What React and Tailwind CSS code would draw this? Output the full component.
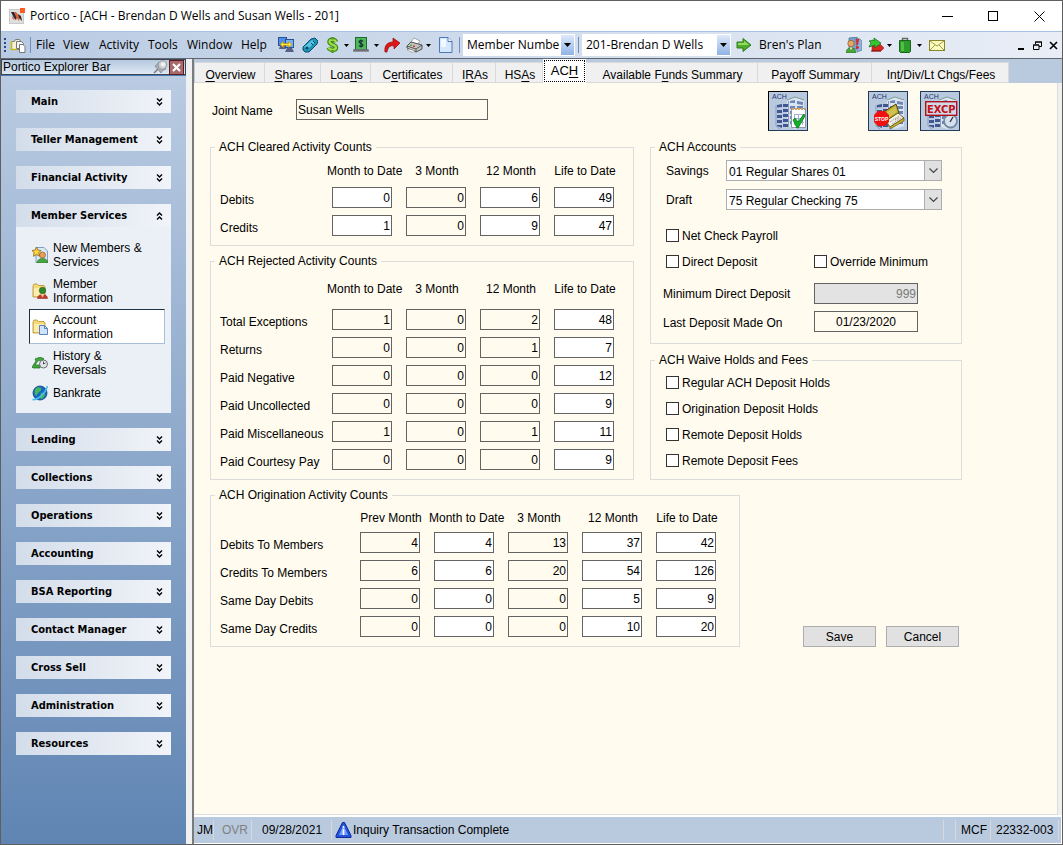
import React from "react";

const ui = "font-['Open_Sans','Noto_Sans',sans-serif]";

/* ---------- toolbar and side bar drawings ---------- */

const Svg = ({ w = 16, h = 16, children, className = "" }) => (
  <svg width={w} height={h} viewBox={`0 0 ${w} ${h}`} className={`shrink-0 ${className}`} aria-hidden="true">
    {children}
  </svg>
);

const LogoIcon = () => (
  <Svg>
    <rect x="0.5" y="1.5" width="14" height="14" fill="#dedede" stroke="#c9c9c9" />
    <path d="M2 4l3 0 3 5-1 3-2-2z" fill="#1f2a44" />
    <path d="M5 4l2 0 4 5-1 4-3-4z" fill="#e8622a" />
    <path d="M9 6l3 2 1 5-3-3z" fill="#2c2c3c" />
    <path d="M3 8l3 3-1 1-2-2z" fill="#f0743c" />
    <rect x="11" y="0" width="5" height="5" fill="#ff5a1f" />
  </Svg>
);

const FolderDocsIcon = () => (
  <Svg>
    <path d="M1.500 4.500h3l1-2h4l1 2v8h-9z" fill="#f3f1de" stroke="#7d7d70" />
    <path d="M1.500 13V4M1 12.500h6" stroke="#c9b81a" strokeWidth="1.600" />
    <path d="M6.500 4.500h5l2 2v5h-7z" fill="#f4f4f4" stroke="#777" />
    <path d="M9.500 7.500h3.500l2 2v6H9.500z" fill="#fff" stroke="#777" />
  </Svg>
);

const ComputersIcon = () => (
  <Svg>
    <rect x="0.5" y="0.5" width="8" height="8" fill="#4f8fe8" stroke="#2d4f96" />
    <path d="M2 9h5l1 3H1z" fill="#5a5f86" />
    <rect x="7.500" y="2.500" width="8" height="8" fill="#79b1f5" stroke="#2d4f96" />
    <path d="M9 11h5l2 4H7z" fill="#5a5f86" />
    <path d="M2 7.500l3.500-3v2h5v-2l3.500 3-3.500 3v-2h-5v2z" fill="#ffe23a" stroke="#b58a00" strokeWidth=".6" />
  </Svg>
);

const RemoteIcon = () => (
  <Svg>
    <path d="M1 10l8-8 4-1 3 3-1 3-8 8-4 0-2-2z" fill="#1d93b8" stroke="#0b4f72" />
    <path d="M2 10l8-7 3 2-8 8z" fill="#56c6e0" />
    <circle cx="5" cy="11" r="1.6" fill="#0d4068" />
    <path d="M9 6l2 2M11 4l2 2" stroke="#0d4068" />
  </Svg>
);

const DollarIcon = () => (
  <Svg w={13}>
    <path d="M10 5C9 2 3.500 2 3.500 5c0 3 6.500 2.500 6.500 5.500 0 3-6 3-7.500 0" fill="none" stroke="#3c8a18" strokeWidth="4.500" />
    <path d="M10 5C9 2 3.500 2 3.500 5c0 3 6.500 2.500 6.500 5.500 0 3-6 3-7.500 0" fill="none" stroke="#a2de48" strokeWidth="2.200" />
    <path d="M6.500 0v2.500M6.500 13v3" stroke="#4e9b20" strokeWidth="2.400" />
  </Svg>
);

const CashIcon = () => (
  <Svg>
    <rect x="2.500" y="0.500" width="11" height="12" fill="#4fb85a" stroke="#1c6b2b" />
    <path d="M10 4.500C9 3 6 3.300 6 5s4 1.200 4 3-3 2-4 .500M8 2.500v8" fill="none" stroke="#123" strokeWidth="1.100" />
    <path d="M0 12h16v3H0z" fill="#8c9296" />
    <path d="M1 13h14" stroke="#4d5255" />
  </Svg>
);

const RedArrowIcon = () => (
  <Svg>
    <path d="M1 15c-1-7 3-10 8-10V1l7 5-6 6V9c-4-1-6 1-7 6z" fill="#e01515" stroke="#8f0a0a" strokeWidth=".7" />
  </Svg>
);

const PrinterIcon = () => (
  <Svg w={17}>
    <path d="M8 1l6 3-3 4-6-3z" fill="#fff" stroke="#888" strokeWidth=".7" />
    <path d="M1 9l4-4 11 3v4l-6 3-9-4z" fill="#c4c4c4" stroke="#444" strokeWidth=".9" />
    <path d="M1 9l9 3 6-4M10 12v3" fill="none" stroke="#444" strokeWidth=".8" />
    <path d="M3 12l6 2-2 1.500-6-2.500z" fill="#fff" stroke="#777" strokeWidth=".5" />
    <rect x="4" y="7.500" width="2" height="1.500" fill="#3fc13f" />
    <rect x="7" y="8.500" width="2" height="1.500" fill="#e03030" />
  </Svg>
);

const PageIcon = () => (
  <Svg w={14}>
    <path d="M.5.500H9L13 4.500v11H.5z" fill="#d5e7fd" stroke="#4f78b8" />
    <path d="M2 2h5v8H2z" fill="#f2f8ff" />
    <path d="M9 .5v4h4" fill="#fff" stroke="#4f78b8" />
  </Svg>
);

const GoIcon = () => (
  <Svg>
    <path d="M1 5h6V1.500L15 8l-8 6.500V11H1z" fill="#4dac2a" stroke="#2f7d16" />
    <path d="M2 6h6V4l5 4H2z" fill="#97dc62" />
  </Svg>
);

const PeopleIcon = () => (
  <Svg>
    <path d="M3 1l8-1v12H3z" fill="#7a9fc9" stroke="#48688f" strokeWidth=".7" />
    <path d="M10 1l4 1 2 2v9l-5 2z" fill="#8fb4dc" stroke="#48688f" strokeWidth=".6" />
    <path d="M10 2h3l-.8 6h-1.400z" fill="#df2222" />
    <circle cx="11.500" cy="10.500" r="1.400" fill="#df2222" />
    <circle cx="5" cy="6.500" r="3.200" fill="#e9a765" stroke="#8a5a22" strokeWidth=".7" />
    <path d="M0 16c0-7 10-7 10 0z" fill="#4ba53a" stroke="#2a6b20" strokeWidth=".6" />
    <path d="M3.500 10.500h3L5 13z" fill="#f7ead0" />
  </Svg>
);

const SwapIcon = () => (
  <Svg>
    <path d="M4 9l4-1h4V7l4 4-3 3H4z" fill="#d9281f" stroke="#8c1410" strokeWidth=".5" />
    <path d="M3 14h10" stroke="#7d100c" />
    <path d="M1 10l2-4-2-2 4-1 1 1V1l7 5-6 5V8z" fill="#35c52f" stroke="#17661a" strokeWidth=".7" />
  </Svg>
);

const BagIcon = () => (
  <Svg w={12}>
    <path d="M3.500 4V1.500h5V4" fill="none" stroke="#5d6b60" strokeWidth="1.400" />
    <path d="M.5 3.500h11v11l-1 1h-9l-1-1z" fill="#2d9c2a" stroke="#17641a" />
    <path d="M2 5h3v9H2z" fill="#4fc043" />
  </Svg>
);

const MailIcon = () => (
  <Svg w={16} h={11}>
    <rect x="0.500" y="0.500" width="15" height="10" fill="#fbfbc0" stroke="#8a8528" />
    <path d="M1 1l7 5 7-5M1 10l5-5M15 10l-5-5" fill="none" stroke="#8a8528" strokeWidth=".8" />
  </Svg>
);

const Caret = ({ className = "" }) => (
  <Svg w={5} h={3} className={className}>
    <path d="M0 0h5L2.500 3z" fill="#000" />
  </Svg>
);

const PinIcon = () => (
  <Svg w={15} h={14}>
    <path d="M5 9L1 13" stroke="#777" strokeWidth="1.400" />
    <path d="M2 6c2-1 2-2 4-4l7 7c-2 1-4 1-5 4z" fill="#a9aeb3" stroke="#80868b" strokeWidth=".8" />
    <circle cx="9.500" cy="5" r="4.300" fill="#c9cccf" stroke="#8f9499" strokeWidth=".8" />
    <circle cx="10" cy="4.500" r="2.300" fill="#f0f1f2" />
  </Svg>
);

const DoubleChevron = ({ up = false }) => (
  <Svg w={7} h={8}>
    {up ? (
      <path d="M1 3.500L3.500 1 6 3.500M1 7.500L3.500 5 6 7.500" fill="none" stroke="#000" strokeWidth="1.400" />
    ) : (
      <path d="M1 .500L3.500 3 6 .500M1 4.500L3.500 7 6 4.500" fill="none" stroke="#000" strokeWidth="1.400" />
    )}
  </Svg>
);

const NewMemberIcon = () => (
  <Svg>
    <path d="M4 .5h8l3.500 3.500v11.500H4z" fill="#d9eafb" stroke="#7496bd" strokeWidth=".9" />
    <circle cx="10.500" cy="8" r="3" fill="#e8a05c" stroke="#96581c" strokeWidth=".7" />
    <path d="M5 16c0-6 11-6 11 0z" fill="#48a63d" stroke="#2a6b20" strokeWidth=".6" />
    <path d="M4.500 0l1.300 3L9 3.500 6.800 5.800l.7 3.400-3-1.600-3 1.700.5-3.500L0 3.500 3.200 3z" fill="#ffd23e" stroke="#8c6610" strokeWidth=".8" />
  </Svg>
);

const Folder = () => (
  <g>
    <path d="M1 14V3l1-2h3l1.500 1.500H12L13 4v10z" fill="#f6d978" stroke="#b38d2a" strokeWidth=".8" />
    <path d="M2 5h10v8H2z" fill="#fdecab" />
  </g>
);

const MemberInfoIcon = () => (
  <Svg>
    <Folder />
    <circle cx="10.500" cy="7.500" r="3.200" fill="#2f8a2c" stroke="#1b5a1b" strokeWidth=".6" />
    <path d="M5.500 15.500c0-5.500 10-5.500 10 0z" fill="#c03a2c" stroke="#7c2018" strokeWidth=".5" />
    <path d="M8.500 11h4l-2 3.500z" fill="#f1c48c" />
  </Svg>
);

const AccountInfoIcon = () => (
  <Svg>
    <Folder />
    <path d="M7.500 6.500h5l3 3v6h-8z" fill="#cfe4fa" stroke="#5b85b8" />
    <path d="M12.500 6.500v3h3" fill="none" stroke="#5b85b8" />
  </Svg>
);

const HistoryIcon = () => (
  <Svg>
    <path d="M0 12l4-6-1-2c4-2 7-2 9 0l-3 2c-2-1-3 0-4 1l-2 3h5v3H1z" fill="#3fa93a" stroke="#1c6620" strokeWidth=".7" />
    <circle cx="11.500" cy="9" r="4" fill="#e3e6e8" stroke="#6d7478" />
    <path d="M11.500 6.500V9l2-1" fill="none" stroke="#444" strokeWidth=".9" />
  </Svg>
);

const GlobeIcon = () => (
  <Svg>
    <circle cx="8" cy="8" r="7" fill="#1668c8" stroke="#0d3f86" strokeWidth=".8" />
    <path d="M4 3c4-2 6 0 5 2S6 7 5 10 1 7 4 3zM9 8c4-1 5 1 3 4s-4 2-4 0z" fill="#46b65a" />
    <path d="M.5 14.500c5 1 13-6 15-13.500" fill="none" stroke="#48c0ea" strokeWidth="1.600" />
  </Svg>
);

const InfoTriangle = () => (
  <Svg w={17}>
    <path d="M7.500.500h2L16 13.500v2H1v-2z" fill="#2452d8" stroke="#0b2a9c" />
    <path d="M8.500 3l4.500 10H4z" fill="#6f9cff" />
    <path d="M8.500 7v6" stroke="#fff" strokeWidth="1.600" />
    <circle cx="8.500" cy="5" r="1" fill="#fff" />
  </Svg>
);

const Building = () => (
  <g>
    <path d="M7 12l9-2 4 2v24l-9 1-4-3z" fill="#bccbe2" />
    <path d="M18 8l8-3 9 3v26l-9 3-8-3z" fill="#dbe4f1" />
    <path d="M8 13l5-1v3l-5 .5zM8 18h5v3H8zM8 23h5v3H8zM8 28h5v3H8zM8 33h5v3l-5-2zM14 12h5v3h-5zM14 17h5v3h-5zM14 22h5v3h-5zM14 27h5v3h-5zM14 32h5v3h-5z" fill="#3f5891" />
    <path d="M21 9l5-1v3h-5zM21 14h5v3h-5zM21 19h5v3h-5zM21 24h5v3h-5zM21 29h5v3h-5zM28 9l6 1v3l-6-1zM28 14h6v3h-6zM28 19h6v3h-6zM28 24h6v3h-6zM28 29h6v3h-6z" fill="#6f86b4" />
    <path d="M18 8l8-3 9 3" fill="none" stroke="#7d9c92" />
    <path d="M7 13v21l4 3M19.500 9v26" fill="none" stroke="#8c9cb8" />
  </g>
);

const AchTag = () => (
  <text x="3" y="7" fontSize="7" fontFamily="Liberation Sans, sans-serif" fill="#1c3674">ACH</text>
);

const AchCheckIcon = () => (
  <Svg w={38} h={38}>
    <Building />
    <AchTag />
    <path d="M22.500 16.500h14v19h-14z" fill="#fff" stroke="#8a97a8" />
    <path d="M23 17h13" stroke="#dca458" strokeWidth="2" strokeDasharray="2 1" />
    <path d="M25 22.500h10M25 26.500h10M25 30.500h10M25.500 22v11M29.500 22v11M33.500 22v11" stroke="#9db4d4" />
    <path d="M24 28l2-2 3 4 6-8 1 2-7 12h-1z" fill="#12b026" stroke="#0b7a19" strokeWidth=".8" />
  </Svg>
);

const AchStopIcon = () => (
  <Svg w={38} h={38}>
    <Building />
    <AchTag />
    <path d="M13 21l14-9 3 9-13 8z" fill="#b7a72a" stroke="#4e4508" />
    <path d="M15 22l12-8 1 6-11 7z" fill="#cfc251" />
    <path d="M17 29l12-8 6 5-14 9z" fill="#f6f3dc" stroke="#4e4508" strokeWidth=".8" />
    <path d="M21 30l9-6M23 32l9-6" stroke="#8fa4d8" strokeDasharray="2 1" />
    <path d="M26 28l5-3" stroke="#d85a5a" strokeDasharray="1 1" />
    <path d="M21 35l14-9v3l-14 8z" fill="#c8b42a" stroke="#4e4508" strokeWidth=".6" />
    <path d="M9 19h7l4 4v7l-4 4H9l-4-4v-7z" fill="#f01010" />
    <text x="12.500" y="28.500" textAnchor="middle" fontSize="5" fontWeight="bold" fontFamily="Liberation Sans, sans-serif" fill="#fff">STOP</text>
  </Svg>
);

const AchExcpIcon = () => (
  <Svg w={38} h={38}>
    <Building />
    <AchTag />
    <circle cx="29.500" cy="29" r="6.500" fill="#d5e2ee" stroke="#7389a4" strokeWidth="1.800" />
    <path d="M29 30l3-5" stroke="#223" strokeWidth="1.200" />
    <rect x="4.700" y="9.700" width="31" height="13.600" fill="#cfd9e8" stroke="#b01018" strokeWidth="1.400" />
    <text x="20.200" y="20.500" textAnchor="middle" fontSize="11" fontWeight="bold" fontFamily="DejaVu Sans Condensed, Liberation Sans, sans-serif" fill="#c01018">EXCP</text>
  </Svg>
);

/* ---------- window chrome ---------- */

const TitleBar = () => (
  <header className="flex h-[30px] items-center bg-white pl-2">
    <LogoIcon />
    <h1 className={`ml-[5px] flex-1 text-xs font-normal ${ui}`}>Portico - [ACH - Brendan D Wells and Susan Wells - 201]</h1>
    <button aria-label="Minimize" className="flex h-full w-[46px] items-center justify-center">
      <Svg w={11} h={11}><path d="M0 5.500h11" stroke="#000" /></Svg>
    </button>
    <button aria-label="Maximize" className="flex h-full w-[46px] items-center justify-center">
      <Svg w={11} h={11}><rect x="0.500" y="0.500" width="9" height="9" fill="none" stroke="#000" /></Svg>
    </button>
    <button aria-label="Close" className="flex h-full w-[46px] items-center justify-center">
      <Svg w={11} h={11}><path d="M.5.500l10 10M10.500.500l-10 10" stroke="#000" /></Svg>
    </button>
  </header>
);

const Sep = ({ className = "" }) => <span className={`h-4 w-px shrink-0 bg-[#6f8fbf] ${className}`} />;

const ToolCombo = ({ label, value, width }) => (
  <div className={`relative h-[22px] shrink-0 bg-white ${width}`}>
    <select aria-label={label} className="size-full appearance-none bg-white pr-3 pl-1 outline-none">
      <option>{value}</option>
    </select>
    <span className="pointer-events-none absolute inset-y-px right-px flex w-[13px] items-center justify-center bg-linear-to-b from-[#dfe9f9] to-[#8fb2e6]">
      <Svg w={7} h={4}><path d="M0 0h7L3.500 4z" fill="#000" /></Svg>
    </span>
  </div>
);

const Tool = ({ label, width, menu = false, children }) => (
  <button aria-label={label} className={`flex shrink-0 items-center ${width}`}>
    {children}
    {menu && <Caret className="ml-auto" />}
  </button>
);

const menus = [
  ["File", "w-[27px]"],
  ["View", "w-9"],
  ["Activity", "w-[49px]"],
  ["Tools", "w-[39px]"],
  ["Window", "w-[54px]"],
  ["Help", "w-[37px]"],
];

const ToolBar = () => (
  <nav className={`flex h-[28px] items-center border-t border-b border-t-[#a9c1e4] border-b-[#5f6670] bg-linear-to-r from-[#b9cbe3] to-[#e9eef6] pl-[3px] text-xs whitespace-nowrap ${ui}`}>
    <Svg w={2} h={14}><path d="M1 0v14" stroke="#2c4a85" strokeWidth="2" strokeDasharray="2 2" /></Svg>
    <span className="ml-1 flex"><FolderDocsIcon /></span>
    <Sep className="mr-[5px] ml-1" />
    {menus.map(([m, w]) => (
      <button key={m} className={`shrink-0 text-left ${w}`}>{m}</button>
    ))}
    <Tool label="Connections" width="w-6"><ComputersIcon /></Tool>
    <Tool label="Card reader" width="w-6"><RemoteIcon /></Tool>
    <Tool label="Transactions" width="w-[23px]" menu><DollarIcon /></Tool>
    <Tool label="Cash" width="w-[26px] ml-1" menu><CashIcon /></Tool>
    <span className="w-[5px] shrink-0" />
    <Tool label="Forward" width="w-[22px]"><RedArrowIcon /></Tool>
    <Tool label="Print" width="w-[25px]" menu><PrinterIcon /></Tool>
    <span className="w-2 shrink-0" />
    <Tool label="New page" width="w-4"><PageIcon /></Tool>
    <Sep className="mr-[3px] ml-1" />
    <ToolCombo label="Search by" value="Member Numbe" width="w-[112px]" />
    <Sep className="mr-[3px] ml-[3px]" />
    <ToolCombo label="Member" value="201-Brendan D Wells" width="w-[149px]" />
    <Tool label="Go" width="ml-[5px] w-[23px]"><GoIcon /></Tool>
    <button className="shrink-0">Bren's Plan</button>
    <span className="max-w-6 flex-1" />
    <Tool label="Contacts" width="w-[22px]"><PeopleIcon /></Tool>
    <Tool label="Transfer" width="w-6" menu><SwapIcon /></Tool>
    <Tool label="Bag" width="w-[23px] ml-[7px]" menu><BagIcon /></Tool>
    <Tool label="Mail" width="ml-[7px] w-4"><MailIcon /></Tool>
    <span className="ml-auto flex gap-[7px] pr-1">
      <button aria-label="Minimize form"><Svg w={9} h={9}><path d="M1 8h6" stroke="#000" strokeWidth="2" /></Svg></button>
      <button aria-label="Restore form"><Svg w={9} h={9}><path d="M2.500 3V1h6v4.500H6M2 1h7" fill="none" stroke="#000" /><path d="M.5 4h5.500v4.500H.500zM0 4h6" fill="none" stroke="#000" /></Svg></button>
      <button aria-label="Close form"><Svg w={9} h={9}><path d="M1 1l7 7M8 1L1 8" stroke="#000" strokeWidth="1.600" /></Svg></button>
    </span>
  </nav>
);

/* ---------- explorer bar ---------- */

const services = [
  { text: "New Members & Services", Icon: NewMemberIcon },
  { text: "Member Information", Icon: MemberInfoIcon },
  { text: "Account Information", Icon: AccountInfoIcon, active: true },
  { text: "History & Reversals", Icon: HistoryIcon },
  { text: "Bankrate", Icon: GlobeIcon },
];

const Section = ({ title, open = false, children }) => (
  <section>
    <button aria-expanded={open} className="flex h-[23px] w-full items-center justify-between bg-linear-to-r from-[#d3ddea] to-[#f1f4f9] pr-2 pl-[15px]">
      <span className="pt-0.5 font-['DejaVu_Sans_Condensed','DejaVu_Sans',sans-serif] text-[11px] font-bold">{title}</span>
      <DoubleChevron up={open} />
    </button>
    {children}
  </section>
);

const Explorer = () => (
  <aside className="flex w-[185px] shrink-0 flex-col bg-linear-to-b from-[#bccde3] to-[#6085b3]">
    <div className="flex h-4 items-center border border-[#3d4654] bg-linear-to-b from-[#b5c8de] to-[#dfe9f4] pl-px">
      <h2 className="flex-1">Portico Explorer Bar</h2>
      <button aria-label="Pin"><PinIcon /></button>
      <button aria-label="Close explorer bar" className="mr-px ml-px flex size-[15px] items-center justify-center border border-[#5d1c1c] bg-[#a86a6c]">
        <Svg w={9} h={9}><path d="M1 1l7 7M8 1L1 8" stroke="#fff" strokeWidth="2.200" /></Svg>
      </button>
    </div>
    <div className="flex flex-col gap-[15px] border-t border-[#4b7ab5] px-[15px] pt-[14px]">
      <Section title="Main" />
      <Section title="Teller Management" />
      <Section title="Financial Activity" />
      <Section title="Member Services" open>
        <ul className="flex flex-col gap-px bg-[#eaf0f5] px-1.5 pt-2.5 pb-[9px] pl-[13px] leading-[14px]">
          {services.map(({ text, Icon, active }) => (
            <li key={text}>
              <a
                href="#"
                aria-current={active ? "page" : undefined}
                className={`flex items-center gap-[5px] border pl-0.5 ${text === "Bankrate" ? "h-[23px]" : "h-[35px]"} ${active ? "border-t-[#1f3044] border-r-[#a9bfd9] border-b-[#a9bfd9] border-l-[#1f3044] bg-white" : "border-transparent"}`}
              >
                <Icon />
                <span className="w-[94px]">{text}</span>
              </a>
            </li>
          ))}
        </ul>
      </Section>
      {["Lending", "Collections", "Operations", "Accounting", "BSA Reporting", "Contact Manager", "Cross Sell", "Administration", "Resources"].map((t) => (
        <Section key={t} title={t} />
      ))}
    </div>
  </aside>
);

/* ---------- tabs ---------- */

const tabs = [
  ["", "O", "verview", "w-[70px]"],
  ["", "S", "hares", "w-14"],
  ["Loa", "n", "s", "w-[50px]"],
  ["C", "e", "rtificates", "w-[82px]"],
  ["I", "R", "As", "w-[43px]"],
  ["HS", "A", "s", "w-[47px]"],
  ["AC", "H", "", "w-[43px]"],
  ["Available F", "u", "nds Summary", "w-[172px]"],
  ["Pa", "y", "off Summary", "w-[114px]"],
  ["In", "t", "/Div/Lt Chgs/Fees", "w-[137px]"],
];

const TabStrip = () => (
  <div role="tablist" className="flex h-[24px] items-end bg-[#b9cadf] pl-px">
    {tabs.map(([a, u, b, w]) => {
      const on = a + u + b === "ACH";
      return (
        <button
          key={a + u + b}
          role="tab"
          aria-selected={on}
          className={`shrink-0 whitespace-nowrap ${w} ${on ? "h-full bg-white p-px text-[13px]" : "h-[21px] border-t border-r border-b border-[#d9d9d9] bg-[#f0f0f0] pt-1 pl-0.5"}`}
        >
          <span className={on ? "flex h-full items-center justify-center border border-dotted border-black" : ""}>
            {a}<u className="underline-offset-2">{u}</u>{b}
          </span>
        </button>
      );
    })}
  </div>
);

/* ---------- form parts ---------- */

const Group = ({ title, className = "", children }) => (
  <fieldset className={`min-w-0 border border-[#dcdcdc] ${className}`}>
    <legend className="ml-1 px-1 leading-[14px]">{title}</legend>
    {children}
  </fieldset>
);

const cleared = [
  ["Debits", 0, 0, 6, 49],
  ["Credits", 1, 0, 9, 47],
];
const rejected = [
  ["Total Exceptions", 1, 0, 2, 48],
  ["Returns", 0, 0, 1, 7],
  ["Paid Negative", 0, 0, 0, 12],
  ["Paid Uncollected", 0, 0, 0, 9],
  ["Paid Miscellaneous", 1, 0, 1, 11],
  ["Paid Courtesy Pay", 0, 0, 0, 9],
];
const origination = [
  ["Debits To Members", 4, 4, 13, 37, 42],
  ["Credits To Members", 6, 6, 20, 54, 126],
  ["Same Day Debits", 0, 0, 0, 5, 9],
  ["Same Day Credits", 0, 0, 0, 10, 20],
];
const periods = ["Month to Date", "3 Month", "12 Month", "Life to Date"];

const CountTable = ({ columns, rows, editable, width, labelWidth, headHeight }) => (
  <table className={`table-fixed border-collapse ${width}`}>
    <thead>
      <tr className={headHeight}>
        <th className={labelWidth} aria-label="Activity" />
        {columns.map((c) => (
          <th key={c} scope="col" className="w-[74px] pt-1 pl-0.5 text-center font-normal whitespace-nowrap">{c}</th>
        ))}
      </tr>
    </thead>
    <tbody>
      {rows.map(([name, ...values]) => (
        <tr key={name} className="h-7">
          <th scope="row" className="pt-1 pl-[9px] text-left font-normal whitespace-nowrap">{name}</th>
          {values.map((v, i) => (
            <td key={i} className="px-[7px] pt-[3px] pb-1">
              <input
                aria-label={`${name}, ${columns[i]}`}
                defaultValue={v}
                readOnly={!editable[i]}
                className={`block h-[21px] w-full border border-[#646464] pr-px text-right outline-none ${editable[i] ? "bg-white" : "bg-[#fffbef]"}`}
              />
            </td>
          ))}
        </tr>
      ))}
    </tbody>
  </table>
);

const Combo = ({ id, label, value }) => (
  <div className="flex h-[21px] items-center">
    <label htmlFor={id} className="w-[60px]">{label}</label>
    <div className="relative h-full w-[216px]">
      <select id={id} className="size-full appearance-none border border-[#adadad] bg-white pt-0.5 pl-0.5 outline-none">
        <option>{value}</option>
      </select>
      <span className="pointer-events-none absolute inset-y-0 right-0 flex w-[18px] items-center justify-center border border-[#adadad] bg-[#e1e1e1]">
        <Svg w={9} h={6}><path d="M.5.500l4 4 4-4" fill="none" stroke="#444" strokeWidth="1.200" /></Svg>
      </span>
    </div>
  </div>
);

const Check = ({ label, className = "" }) => (
  <label className={`flex h-[26px] items-center gap-[3px] ${className}`}>
    <input type="checkbox" className="size-[13px] appearance-none border border-[#333] bg-white checked:bg-[#333]" />
    <span className="pt-0.5">{label}</span>
  </label>
);

const Form = () => (
  <form className="flex-1 border-r border-b border-[#dcdcdc] bg-[#fffbef] pt-2 pl-4" onSubmit={(e) => e.preventDefault()}>
    <div className="flex w-[752px] items-start pr-0.5 pl-0.5">
      <div className="flex flex-1 items-center pt-2">
        <label htmlFor="joint" className="w-[84px] pt-0.5">Joint Name</label>
        <input id="joint" readOnly defaultValue="Susan Wells" className="h-[21px] w-[192px] border border-[#646464] pl-px outline-none" />
      </div>
      <button aria-label="ACH activity" className="mr-[60px] border border-t-black border-r-[#23395a] border-b-[#23395a] border-l-black bg-[#b9cadf]"><AchCheckIcon /></button>
      <button aria-label="ACH stop payment" className="mr-3 border border-[#23395a] bg-[#b9cadf]"><AchStopIcon /></button>
      <button aria-label="ACH exceptions" className="border border-[#23395a] bg-[#b9cadf]"><AchExcpIcon /></button>
    </div>

    <div className="mt-[9px] flex gap-4">
      <div className="flex w-[424px] flex-col gap-2">
        <Group title="ACH Cleared Activity Counts" className="pb-[5px]">
          <CountTable columns={periods} rows={cleared} editable={[true, false, true, true]} width="w-[410px]" labelWidth="w-[114px]" headHeight="h-[30px]" />
        </Group>
        <Group title="ACH Rejected Activity Counts" className="pb-[5px]">
          <CountTable columns={periods} rows={rejected} editable={[false, false, false, true]} width="w-[410px]" labelWidth="w-[114px]" headHeight="h-[38px]" />
        </Group>
      </div>
      <div className="flex w-[312px] flex-col gap-[9px]">
        <Group title="ACH Accounts" className="pb-[11px]">
          <div className="flex flex-col gap-2 pt-1.5 pl-[15px]">
            <Combo id="savings" label="Savings" value="01 Regular Shares 01" />
            <Combo id="draft" label="Draft" value="75 Regular Checking 75" />
          </div>
          <div className="mt-3 pl-[15px]">
            <Check label="Net Check Payroll" />
            <div className="flex">
              <Check label="Direct Deposit" className="w-[148px]" />
              <Check label="Override Minimum" />
            </div>
          </div>
          <div className="mt-[9px] flex flex-col gap-[7px] pl-3">
            <div className="flex items-center">
              <label htmlFor="min" className="w-[151px]">Minimum Direct Deposit</label>
              <input id="min" disabled defaultValue="999" className="h-[21px] w-[104px] border border-[#646464] bg-[#e3e3e3] pr-px text-right text-[#7a7a7a]" />
            </div>
            <div className="flex items-center">
              <label htmlFor="last" className="w-[151px] pt-0.5">Last Deposit Made On</label>
              <input id="last" readOnly defaultValue="01/23/2020" className="h-[21px] w-[104px] border border-[#646464] text-center outline-none" />
            </div>
          </div>
        </Group>
        <Group title="ACH Waive Holds and Fees" className="pb-1.5">
          <div className="pt-0.5 pl-[15px]">
            <Check label="Regular ACH Deposit Holds" />
            <Check label="Origination Deposit Holds" />
            <Check label="Remote Deposit Holds" />
            <Check label="Remote Deposit Fees" />
          </div>
        </Group>
      </div>
    </div>

    <div className="mt-2 flex items-end">
      <Group title="ACH Origination Activity Counts" className="w-[530px] pb-[5px]">
        <CountTable columns={["Prev Month", ...periods]} rows={origination} editable={[false, true, false, true, true]} width="w-[512px]" labelWidth="w-[142px]" headHeight="h-[27px]" />
      </Group>
      <button className="ml-[63px] h-[21px] w-[73px] border border-[#adadad] bg-[#e1e1e1]">Save</button>
      <button className="ml-2.5 h-[21px] w-[73px] border border-[#adadad] bg-[#e1e1e1]">Cancel</button>
    </div>
  </form>
);

const StatusBar = () => (
  <footer className="mt-0.5 mr-px mb-px flex h-[26px] items-center bg-[#b9cadf] py-[3px] pr-0.5 pl-[3px] whitespace-nowrap">
    <span className="flex h-full w-[17px] items-center border-r border-[#d9d9d9]">JM</span>
    <span className="flex h-full w-[38px] items-center border-r border-[#d9d9d9] pl-2 text-[#808080]">OVR</span>
    <span className="flex h-full w-20 items-center border-r border-[#d9d9d9] pl-2.5">09/28/2021</span>
    <span className="flex h-full flex-1 items-center gap-px border-r border-[#d9d9d9] pl-[3px]"><InfoTriangle />Inquiry Transaction Complete</span>
    <span className="h-full w-3 border-r border-[#d9d9d9]" />
    <span className="flex h-full w-[35px] items-center border-r border-[#d9d9d9] pl-[5px]">MCF</span>
    <span className="flex h-full w-[68px] items-center border-r border-[#d9d9d9] pl-[5px]">22332-003</span>
  </footer>
);

export default function App() {
  return (
    <div className="flex min-h-screen flex-col border border-[#5f5f5f] bg-white font-['Liberation_Sans',Arial,sans-serif] text-xs text-black">
      <TitleBar />
      <ToolBar />
      <div className="flex flex-1">
        <Explorer />
        <div className="w-1.5 shrink-0 bg-[#f0f0f0]" />
        <main className="flex min-w-0 flex-1 flex-col border-l-2 border-[#7b7b7b] bg-white">
          <TabStrip />
          <div className="flex flex-1 bg-[#f0f0f0] pr-1"><Form /></div>
          <StatusBar />
        </main>
      </div>
    </div>
  );
}
